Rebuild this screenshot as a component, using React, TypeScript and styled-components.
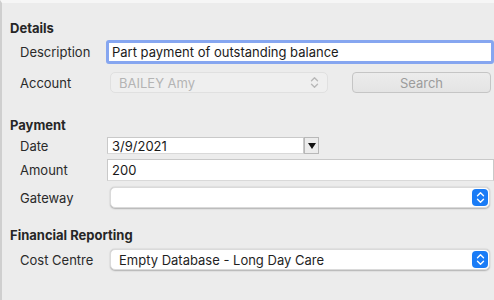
import { createGlobalStyle, styled } from "styled-components";

const Global = createGlobalStyle`
    html, body {
        margin: 0;
        padding: 0;
        background: #ececec;
    }
    body {
        font-family: Inter, "Liberation Sans", sans-serif;
        font-size: 13px;
        color: #262626;
        overflow: hidden;
    }
`;

const Window = styled.div`
    width: 494px;
    height: 300px;
    box-sizing: border-box;
    border-left: 2px solid #cfcfcf;
    border-top: 3px solid #f6f6f6;
    padding: 16px 0 0 8px;
`;

const Heading = styled.h3<{ $top?: number }>`
    margin: ${(p) => p.$top ?? 0}px 0 0 0;
    height: 18px;
    line-height: 18px;
    font-size: 13px;
    font-weight: 700;
    color: #262626;
`;

const Row = styled.div<{ $top: number; $height: number }>`
    display: flex;
    align-items: center;
    margin-top: ${(p) => p.$top}px;
    height: ${(p) => p.$height}px;
`;

const Label = styled.label`
    width: 87px;
    flex-shrink: 0;
    padding-left: 10px;
    color: #2a2a2a;
`;

const TextInput = styled.div<{ $indent?: number; $width?: string }>`
    margin-left: ${(p) => p.$indent ?? 0}px;
    width: ${(p) => p.$width ?? "auto"};
    flex: ${(p) => (p.$width ? "none" : "1")};
    height: 100%;
    box-sizing: border-box;
    background: #fff;
    border: 1px solid #c9c9c9;
    border-bottom-color: #d9d9d9;
    padding: 0 4px;
    display: flex;
    align-items: center;
    color: #1a1a1a;
`;

const FocusedInput = styled(TextInput)`
    border: 3px solid #86a6f0;
    border-radius: 3px;
    padding: 0 3px;
`;

const DateBox = styled.div`
    display: flex;
    height: 100%;
    width: 212px;
`;

const DateArrow = styled.div`
    width: 15px;
    height: 100%;
    box-sizing: border-box;
    border: 1px solid #b8b8b8;
    background: #ececec;
    display: flex;
    align-items: center;
    justify-content: center;
    &::after {
        content: "";
        border-left: 4px solid transparent;
        border-right: 4px solid transparent;
        border-top: 6px solid #111;
        margin-top: 1px;
    }
`;

const Select = styled.div<{ $width?: string; $disabled?: boolean }>`
    width: ${(p) => p.$width ?? "auto"};
    flex: ${(p) => (p.$width ? "none" : "1")};
    margin-left: 3px;
    margin-right: 4px;
    height: 100%;
    box-sizing: border-box;
    border-radius: 5px;
    background: ${(p) => (p.$disabled ? "#efefef" : "#fff")};
    border: 1px solid ${(p) => (p.$disabled ? "#e0e0e0" : "#dadada")};
    box-shadow: ${(p) => (p.$disabled ? "none" : "0 0.5px 1.5px rgba(0,0,0,0.25)")};
    display: flex;
    align-items: center;
    justify-content: space-between;
    padding: 0 1px 0 8px;
    color: ${(p) => (p.$disabled ? "#b4b4b4" : "#1f1f1f")};
`;

const Stepper = styled.span<{ $disabled?: boolean }>`
    width: 16px;
    height: 17px;
    border-radius: 4px;
    background: ${(p) => (p.$disabled ? "transparent" : "#1a7cf6")};
    display: flex;
    align-items: center;
    justify-content: center;
    margin-right: ${(p) => (p.$disabled ? "4px" : "0")};
`;

const Button = styled.button`
    margin-left: 20px;
    width: 139px;
    height: 100%;
    box-sizing: border-box;
    border-radius: 4px;
    border: 1px solid #c5c5c5;
    background: linear-gradient(#ececec, #e4e4e4);
    font-family: inherit;
    font-size: 13px;
    color: #9c9c9c;
    padding: 0;
`;

function Chevrons({ color }: { color: string }) {
    return (
        <svg width="9" height="13" viewBox="0 0 9 13">
            <path
                d="M1.5 4.8 L4.5 1.8 L7.5 4.8 M1.5 8.2 L4.5 11.2 L7.5 8.2"
                fill="none"
                stroke={color}
                strokeWidth="1.4"
                strokeLinecap="round"
                strokeLinejoin="round"
            />
        </svg>
    );
}

export default function App() {
    return (
        <>
            <Global />
            <Window>
                <Heading>Details</Heading>
                <Row $top={3} $height={24}>
                    <Label>Description</Label>
                    <FocusedInput $indent={-1}>
                        Part payment of outstanding balance
                    </FocusedInput>
                </Row>
                <Row $top={8} $height={21}>
                    <Label>Account</Label>
                    <Select $width="218px" $disabled>
                        BAILEY Amy
                        <Stepper $disabled>
                            <Chevrons color="#b8b8b8" />
                        </Stepper>
                    </Select>
                    <Button>Search</Button>
                </Row>
                <Heading $top={23}>Payment</Heading>
                <Row $top={3} $height={17}>
                    <Label>Date</Label>
                    <DateBox>
                        <TextInput $width="197px">3/9/2021</TextInput>
                        <DateArrow />
                    </DateBox>
                </Row>
                <Row $top={5} $height={22}>
                    <Label>Amount</Label>
                    <TextInput>200</TextInput>
                </Row>
                <Row $top={6} $height={21}>
                    <Label>Gateway</Label>
                    <Select>
                        <span />
                        <Stepper>
                            <Chevrons color="#fff" />
                        </Stepper>
                    </Select>
                </Row>
                <Heading $top={18}>Financial Reporting</Heading>
                <Row $top={5} $height={21}>
                    <Label>Cost Centre</Label>
                    <Select>
                        Empty Database - Long Day Care
                        <Stepper>
                            <Chevrons color="#fff" />
                        </Stepper>
                    </Select>
                </Row>
            </Window>
        </>
    );
}
